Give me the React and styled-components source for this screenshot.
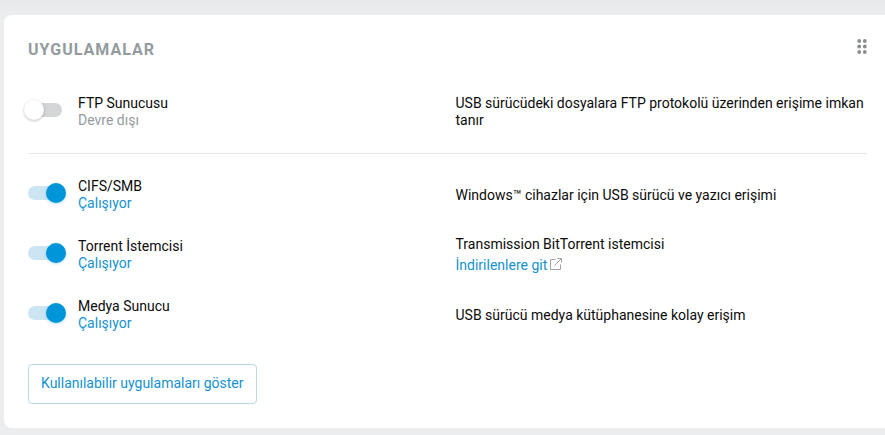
import { useState } from "react";
import styled, { createGlobalStyle } from "styled-components";

const theme = {
  blue: "#0095d9",
  linkBlue: "#1492d0",
  paleBlue: "#cce5f3",
  grey: "#949b9e",
  lightGrey: "#d4d5d7",
  line: "#e6e7e8",
  page: "#ecedef",
};

const GlobalStyle = createGlobalStyle`
  * {
    box-sizing: border-box;
  }

  body {
    margin: 0;
    background-color: ${theme.page};
    color: #0b0b0b;
    font-family: Roboto, "Liberation Sans", sans-serif;
    font-size: 14px;
    line-height: 17px;
  }
`;

const Page = styled.main`
  padding: 15px 0px 7px 4px;
  background: linear-gradient(#e6e8ea, ${theme.page} 15px);
`;

const Card = styled.section`
  padding: 24px 18px 24px 24px;
  background-color: white;
  border-radius: 8px 0px 0px 8px;
`;

const Header = styled.header`
  display: flex;
  align-items: flex-start;
  justify-content: space-between;
  margin-bottom: 20px;
`;

const Title = styled.h2`
  margin: 0px;
  color: ${theme.grey};
  font-size: 16px;
  font-weight: 700;
  line-height: 22px;
  letter-spacing: 1px;
`;

const DragButton = styled.button`
  display: flex;
  padding: 0px;
  border: none;
  background: none;
  color: #8a8d90;
  cursor: grab;
`;

const List = styled.ul`
  margin: 0px;
  padding: 0px;
  list-style: none;

  & + & {
    margin-top: 12px;
    padding-top: 10px;
    border-top: 1px solid ${theme.line};
  }
`;

const Row = styled.li`
  display: grid;
  grid-template-columns: 1fr 1fr;
  align-items: center;
  gap: 16px;
  min-height: 60px;
  padding-top: 2px;
`;

const AppLabel = styled.label`
  display: flex;
  align-items: flex-start;
  gap: 16px;
  cursor: pointer;
`;

const Switch = styled.input`
  position: relative;
  flex: none;
  appearance: none;
  width: 34px;
  height: 14px;
  margin: 8px 0px 0px;
  border-radius: 7px;
  background-color: ${theme.lightGrey};
  cursor: pointer;

  &::before {
    content: "";
    position: absolute;
    top: -3px;
    left: -4px;
    width: 20px;
    height: 20px;
    border-radius: 50%;
    background-color: white;
    box-shadow: 0 1px 3px rgba(0, 0, 0, 0.25);
    transition: left 0.2s ease;
  }

  &:checked {
    background-color: ${theme.paleBlue};
  }

  &:checked::before {
    left: 18px;
    background-color: ${theme.blue};
    box-shadow: 0 1px 3px rgba(0, 149, 217, 0.3);
  }
`;

const Name = styled.span`
  display: block;
`;

const Status = styled.span`
  display: block;
  color: ${({ $on }) => ($on ? theme.linkBlue : theme.grey)};
`;

const Description = styled.div`
  display: flex;
  flex-direction: column;
  align-items: flex-start;
  gap: 4px;
`;

const Link = styled.a`
  display: flex;
  align-items: center;
  gap: 3px;
  color: ${theme.linkBlue};
  text-decoration: none;

  svg {
    margin-bottom: 3px;
  }
`;

const ShowButton = styled.button`
  height: 40px;
  margin-top: 20px;
  padding: 0px 12px 2px;
  border: 1px solid #b9d9e8;
  border-radius: 4px;
  background-color: white;
  color: ${theme.linkBlue};
  font: inherit;
  cursor: pointer;
`;

const DragIcon = () => (
  <svg width="10" height="15" viewBox="0 0 10 15" fill="currentColor" aria-hidden="true">
    {[2, 7.5, 13].map((y) => (
      <g key={y}>
        <circle cx="2.2" cy={y} r="1.9" />
        <circle cx="7.8" cy={y} r="1.9" />
      </g>
    ))}
  </svg>
);

const ExternalIcon = () => (
  <svg width="12" height="12" viewBox="0 0 12 12" fill="none" stroke="#a0a3a6" aria-hidden="true">
    <path d="M5.5 1.5H.5v10h10V6.5" />
    <path d="M7.5.5h4v4M11.5.5 4.5 7.5" />
  </svg>
);

const disabledApps = [
  {
    id: "ftp",
    name: "FTP Sunucusu",
    text: "USB sürücüdeki dosyalara FTP protokolü üzerinden erişime imkan tanır",
    enabled: false,
  },
];

const runningApps = [
  {
    id: "cifs",
    name: "CIFS/SMB",
    text: "Windows™ cihazlar için USB sürücü ve yazıcı erişimi",
    enabled: true,
  },
  {
    id: "torrent",
    name: "Torrent İstemcisi",
    text: "Transmission BitTorrent istemcisi",
    link: "İndirilenlere git",
    enabled: true,
  },
  {
    id: "media",
    name: "Medya Sunucu",
    text: "USB sürücü medya kütüphanesine kolay erişim",
    enabled: true,
  },
];

const AppRow = ({ app }) => {
  const [on, setOn] = useState(app.enabled);

  return (
    <Row>
      <AppLabel htmlFor={app.id}>
        <Switch
          type="checkbox"
          id={app.id}
          checked={on}
          onChange={(e) => setOn(e.target.checked)}
        />
        <span>
          <Name>{app.name}</Name>
          <Status $on={on}>{on ? "Çalışıyor" : "Devre dışı"}</Status>
        </span>
      </AppLabel>
      <Description>
        <span>{app.text}</span>
        {app.link && (
          <Link href="#downloads">
            {app.link}
            <ExternalIcon />
          </Link>
        )}
      </Description>
    </Row>
  );
};

const App = () => {
  return (
    <>
      <GlobalStyle />
      <Page>
        <Card>
          <Header>
            <Title>UYGULAMALAR</Title>
            <DragButton type="button" aria-label="Taşı">
              <DragIcon />
            </DragButton>
          </Header>
          <List>
            {disabledApps.map((app) => (
              <AppRow key={app.id} app={app} />
            ))}
          </List>
          <List>
            {runningApps.map((app) => (
              <AppRow key={app.id} app={app} />
            ))}
          </List>
          <ShowButton type="button">Kullanılabilir uygulamaları göster</ShowButton>
        </Card>
      </Page>
    </>
  );
};

export default App;
